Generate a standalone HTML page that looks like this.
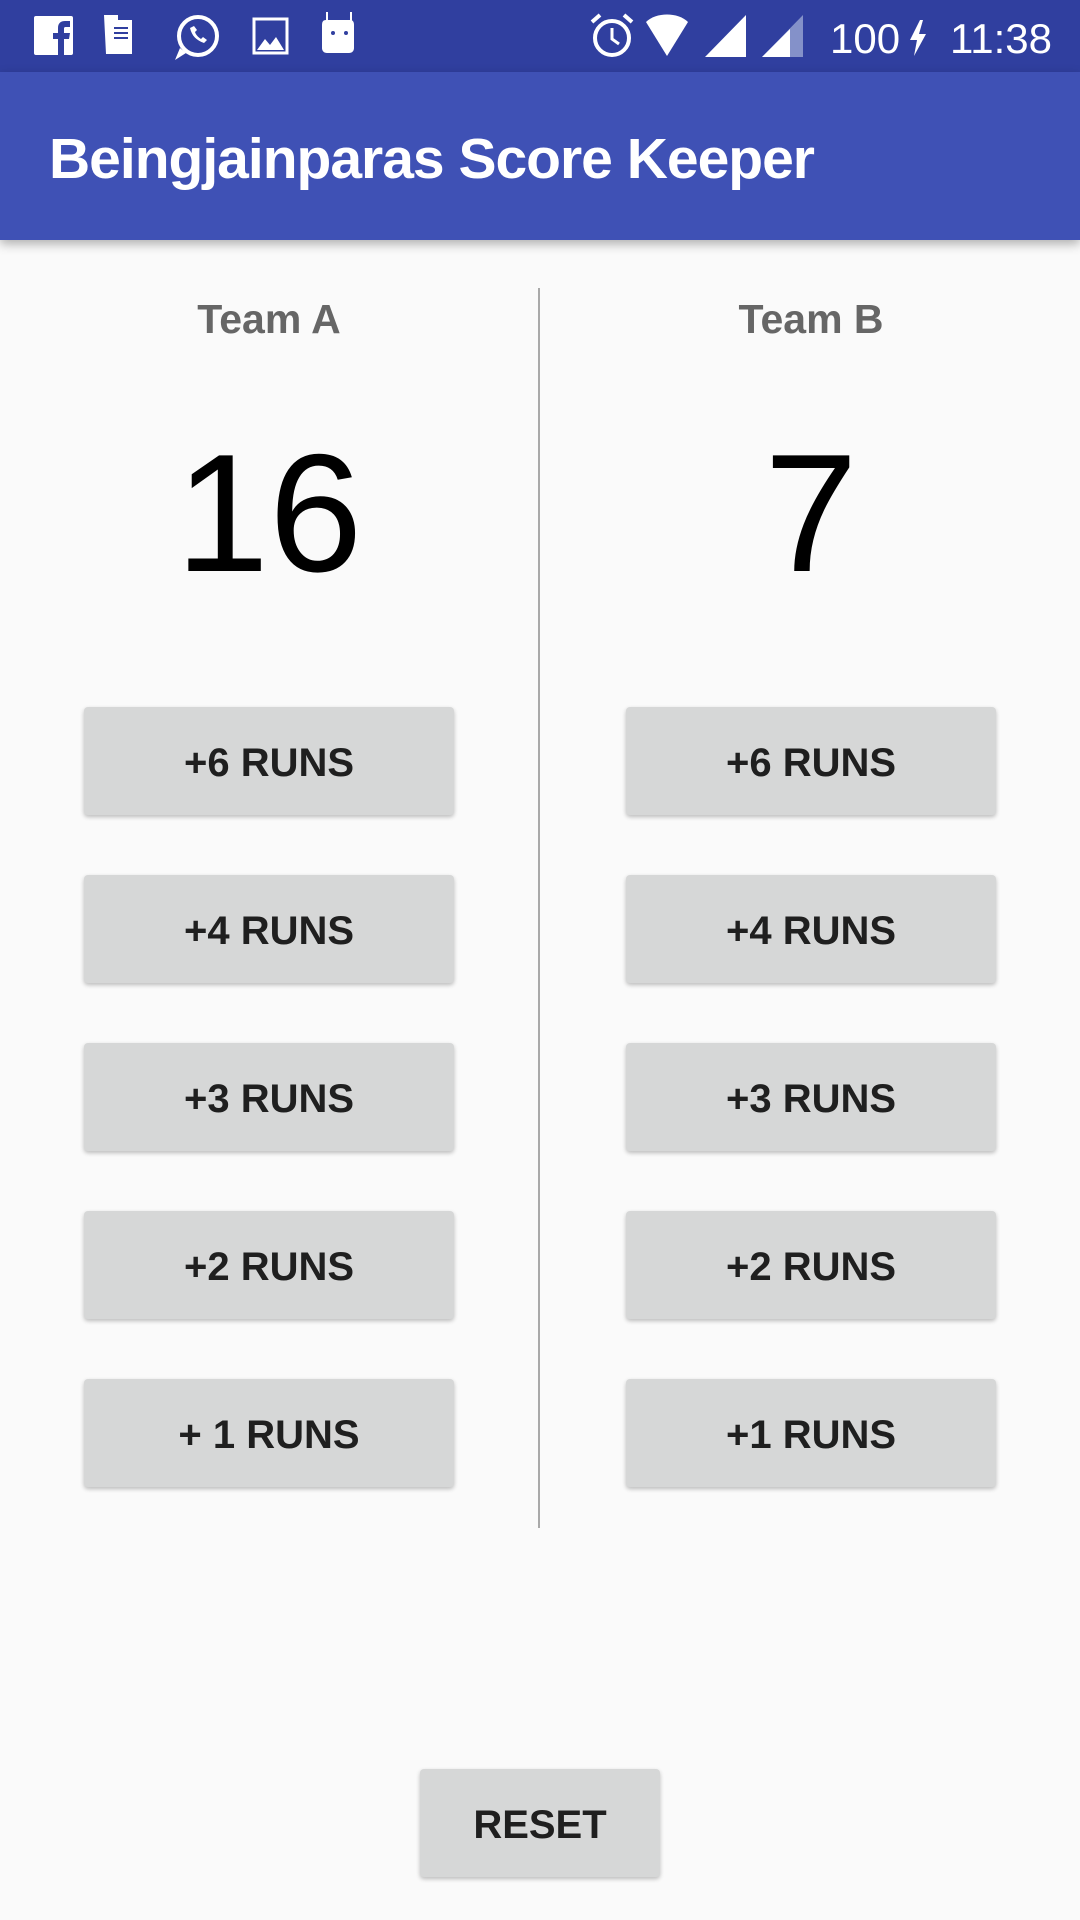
<!DOCTYPE html>
<html><head><meta charset="utf-8"><style>
*{margin:0;padding:0;box-sizing:border-box}
body{width:1080px;height:1920px;background:#fafafa;position:relative;overflow:hidden;font-family:"Liberation Sans",sans-serif}
.sb{position:absolute;left:0;top:0;width:1080px;height:72px;background:#303f9f}
.ab{position:absolute;left:0;top:72px;width:1080px;height:168px;background:#3f51b5;box-shadow:0 4px 10px rgba(0,0,0,.3)}
.t{position:absolute;line-height:1;white-space:nowrap}
.btn{position:absolute;width:370px;height:108px;background:#d6d7d7;border-radius:4px;box-shadow:0 2px 4px rgba(0,0,0,.25);color:#1f1f1f;font-size:40px;font-weight:bold;display:flex;align-items:center;justify-content:center;padding-top:5px}
</style></head><body>
<div class="sb">
<svg width="1080" height="72" style="position:absolute;left:0;top:0" fill="#fff">
<rect x="34" y="16" width="39" height="39" rx="2"/>
<path d="M58 55V39h-5v-6h5v-5c0-5 3-7 7-7h5v6h-4c-2 0-2 1-2 2v4h6l-1 6h-5v16z" fill="#303f9f"/>
<path d="M104 15h14v5h-8v34h-4z M110 20h22v34h-22z" />
<rect x="114" y="27" width="14" height="2" fill="#303f9f"/><rect x="114" y="32" width="14" height="2" fill="#303f9f"/><rect x="114" y="37" width="14" height="2" fill="#303f9f"/>
<circle cx="198" cy="36" r="19" fill="none" stroke="#fff" stroke-width="4"/>
<path d="M175 60l5-12 6 5z"/>
<path d="M190 28c2 8 6 12 14 15l3-3-4-3-2 2c-3-2-5-4-6-7l2-2-3-4z"/>
<rect x="254" y="19" width="33" height="34" fill="none" stroke="#fff" stroke-width="3"/>
<path d="M257 50l8-11 5 6 6-8 8 13z"/>
<path d="M326 20h24c3 0 4 2 4 5v23c0 3-2 5-5 5h-22c-3 0-5-2-5-5V25c0-3 1-5 4-5z"/>
<rect x="326" y="12" width="2" height="9"/><rect x="350" y="12" width="2" height="9"/>
<circle cx="333" cy="33" r="2" fill="#303f9f"/><circle cx="346" cy="33" r="2" fill="#303f9f"/>
<circle cx="612" cy="38" r="17" fill="none" stroke="#fff" stroke-width="4"/>
<path d="M612 28v11l7 5" fill="none" stroke="#fff" stroke-width="3"/>
<path d="M592 22l8-7M632 22l-8-7" stroke="#fff" stroke-width="4"/>
<path d="M646 22c10-10 32-10 42 0l-21 34z"/>
<path d="M705 57l41-42v42z"/>
<path d="M762 57l41-42v42z" fill="#8491c9"/><path d="M762 57l28-28v28z"/>
</svg>
<div class="t" style="left:830px;top:18px;font-size:42px;color:#fff">100</div>
<svg width="20" height="36" style="position:absolute;left:908px;top:20px"><path d="M12 0L2 20h7l-3 16 12-22h-7l4-14z" fill="#fff"/></svg>
<div class="t" style="left:950px;top:18px;font-size:42px;color:#fff">11:38</div>
</div>
<div class="ab"></div>
<div class="t" style="left:49px;top:131px;font-size:57px;color:#fff;font-weight:bold;letter-spacing:-1px">Beingjainparas Score Keeper</div>
<div style="position:absolute;left:538px;top:288px;width:2px;height:1240px;background:#a9a9a9"></div>
<div class="t" style="left:84px;width:370px;text-align:center;top:299px;font-size:41px;color:#666;font-weight:bold">Team A</div>
<div class="t" style="left:626px;width:370px;text-align:center;top:299px;font-size:41px;color:#666;font-weight:bold">Team B</div>
<div class="t" style="left:84px;width:370px;text-align:center;top:429px;font-size:168px;color:#000">16</div>
<div class="t" style="left:626px;width:370px;text-align:center;top:429px;font-size:168px;color:#000">7</div>
<div class="btn" style="left:84px;top:707px">+6 RUNS</div>
<div class="btn" style="left:84px;top:875px">+4 RUNS</div>
<div class="btn" style="left:84px;top:1043px">+3 RUNS</div>
<div class="btn" style="left:84px;top:1211px">+2 RUNS</div>
<div class="btn" style="left:84px;top:1379px">+ 1 RUNS</div>
<div class="btn" style="left:626px;top:707px">+6 RUNS</div>
<div class="btn" style="left:626px;top:875px">+4 RUNS</div>
<div class="btn" style="left:626px;top:1043px">+3 RUNS</div>
<div class="btn" style="left:626px;top:1211px">+2 RUNS</div>
<div class="btn" style="left:626px;top:1379px">+1 RUNS</div>
<div class="btn" style="left:420px;top:1769px;width:240px">RESET</div>
</body></html>
